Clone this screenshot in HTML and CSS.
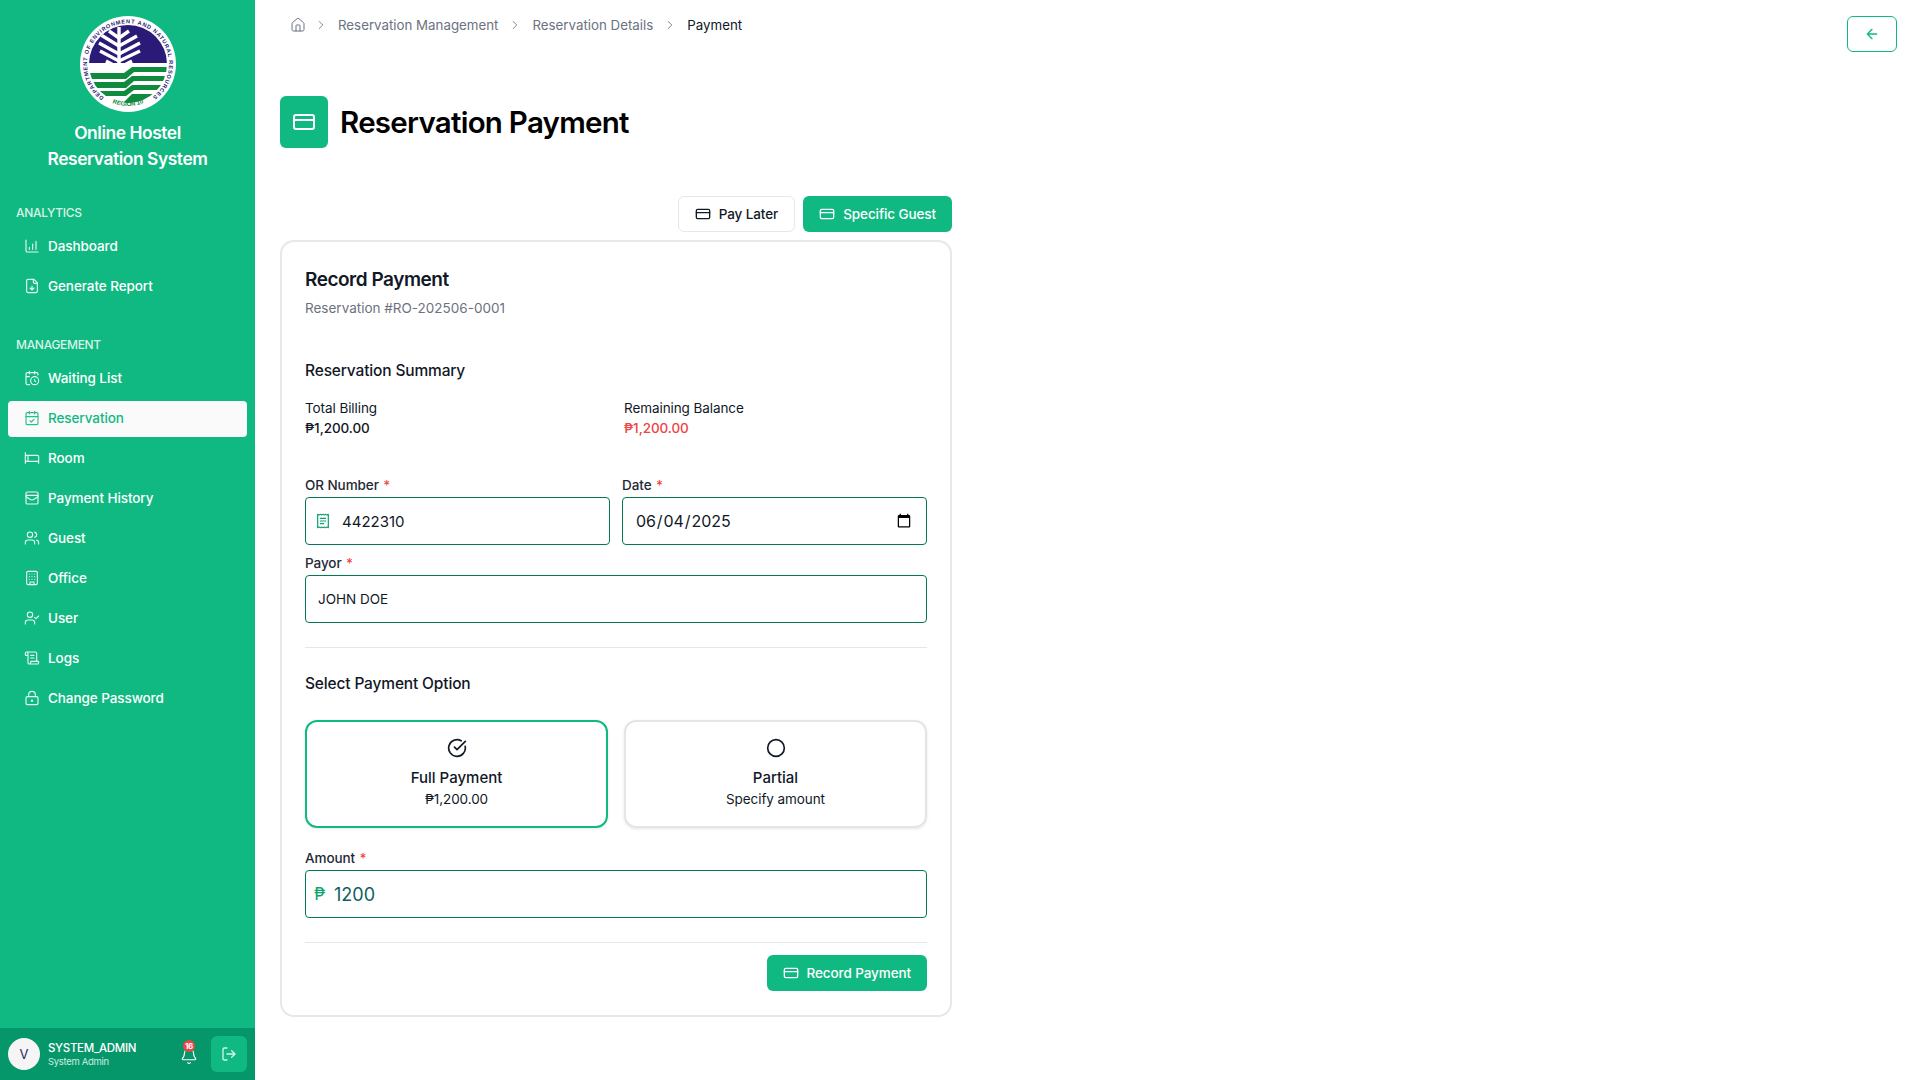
FILE: index.html
```html
<!DOCTYPE html>
<html lang="en">
<head>
    <meta charset="utf-8">
    <title>Reservation Payment</title>
    <link rel="stylesheet" href="styles.css">
</head>
<body>
    <!-- icon set -->
    <svg class="icon-defs" aria-hidden="true">
        <symbol id="i-chart" viewBox="0 0 24 24"><path d="M3 3v16a2 2 0 0 0 2 2h16M8 17v-3M13 17V9M18 17V5"/></symbol>
        <symbol id="i-file" viewBox="0 0 24 24"><path d="M15 2H6a2 2 0 0 0-2 2v16a2 2 0 0 0 2 2h12a2 2 0 0 0 2-2V7Z"/><path d="M14 2v4a2 2 0 0 0 2 2h4M12 18v-6M9 15l3 3 3-3"/></symbol>
        <symbol id="i-cal-clock" viewBox="0 0 24 24"><path d="M21 7.500V6a2 2 0 0 0-2-2H5a2 2 0 0 0-2 2v14a2 2 0 0 0 2 2h3.500M16 2v4M8 2v4M3 10h5M17.500 17.500 16 16.300V14"/><circle cx="16" cy="16" r="6"/></symbol>
        <symbol id="i-cal-check" viewBox="0 0 24 24"><path d="M8 2v4M16 2v4M3 10h18M9 16l2 2 4-4"/><rect x="3" y="4" width="18" height="18" rx="2"/></symbol>
        <symbol id="i-bed" viewBox="0 0 24 24"><path d="M2 4v16M2 8h18a2 2 0 0 1 2 2v10M2 17h20M6 8v9"/></symbol>
        <symbol id="i-wallet" viewBox="0 0 24 24"><rect x="3" y="3" width="18" height="18" rx="2"/><path d="M3 8h18M3 10l6 4c2 1.300 4 1.300 6 0l6-4"/></symbol>
        <symbol id="i-users" viewBox="0 0 24 24"><path d="M16 21v-2a4 4 0 0 0-4-4H6a4 4 0 0 0-4 4v2M22 21v-2a4 4 0 0 0-3-3.870M16 3.130a4 4 0 0 1 0 7.750"/><circle cx="9" cy="7" r="4"/></symbol>
        <symbol id="i-office" viewBox="0 0 24 24"><rect x="4" y="2" width="16" height="20" rx="2"/><path d="M9 22v-4h6v4M8 6h.01M12 6h.01M16 6h.01M8 10h.01M12 10h.01M16 10h.01M8 14h.01M12 14h.01M16 14h.01"/></symbol>
        <symbol id="i-user" viewBox="0 0 24 24"><path d="M16 21v-2a4 4 0 0 0-4-4H6a4 4 0 0 0-4 4v2M16 11l2 2 4-4"/><circle cx="9" cy="7" r="4"/></symbol>
        <symbol id="i-scroll" viewBox="0 0 24 24"><path d="M15 12h-5M15 8h-5M19 17V5a2 2 0 0 0-2-2H4M8 21h12a2 2 0 0 0 2-2v-1a1 1 0 0 0-1-1H11a1 1 0 0 0-1 1v1a2 2 0 1 1-4 0V5a2 2 0 1 0-4 0v2a1 1 0 0 0 1 1h3"/></symbol>
        <symbol id="i-lock" viewBox="0 0 24 24"><circle cx="12" cy="16" r="1"/><rect x="3" y="10" width="18" height="12" rx="2"/><path d="M7 10V7a5 5 0 0 1 10 0v3"/></symbol>
        <symbol id="i-bell" viewBox="0 0 24 24"><path d="M10.268 21a2 2 0 0 0 3.464 0M3.262 15.326A1 1 0 0 0 4 17h16a1 1 0 0 0 .74-1.673C19.410 13.956 18 12.499 18 8A6 6 0 0 0 6 8c0 4.499-1.411 5.956-2.738 7.326"/></symbol>
        <symbol id="i-logout" viewBox="0 0 24 24"><path d="M9 21H5a2 2 0 0 1-2-2V5a2 2 0 0 1 2-2h4M16 17l5-5-5-5M21 12H9"/></symbol>
        <symbol id="i-home" viewBox="0 0 24 24"><path d="M15 21v-8a1 1 0 0 0-1-1h-4a1 1 0 0 0-1 1v8"/><path d="M3 10a2 2 0 0 1 .709-1.528l7-5.999a2 2 0 0 1 2.582 0l7 5.999A2 2 0 0 1 21 10v9a2 2 0 0 1-2 2H5a2 2 0 0 1-2-2z"/></symbol>
        <symbol id="i-chevron" viewBox="0 0 24 24"><path d="M9 18l6-6-6-6"/></symbol>
        <symbol id="i-card" viewBox="0 0 24 24"><rect x="2" y="5" width="20" height="14" rx="2"/><path d="M2 10h20"/></symbol>
        <symbol id="i-back" viewBox="0 0 24 24"><path d="M12 19l-7-7 7-7M19 12H5"/></symbol>
        <symbol id="i-receipt" viewBox="0 0 24 24"><path d="M4 2v20l2-1 2 1 2-1 2 1 2-1 2 1 2-1 2 1V2l-2 1-2-1-2 1-2-1-2 1-2-1-2 1Z"/><path d="M16 8H8M16 12H8M13 16H8"/></symbol>
        <symbol id="i-check" viewBox="0 0 24 24"><path d="M21.801 10A10 10 0 1 1 17 3.335M9 11l3 3L22 4"/></symbol>
        <symbol id="i-circle" viewBox="0 0 24 24"><circle cx="12" cy="12" r="10"/></symbol>
    </svg>

    <aside class="sidebar">
        <div class="brand">
            <svg class="logo" viewBox="0 0 96 96" role="img" aria-label="DENR Region 10 seal">
                <defs>
                    <clipPath id="inner"><circle cx="48" cy="48" r="39"/></clipPath>
                    <path id="ringTop" d="M24 81.500A41 41 0 1 1 72 81.500"/>
                    <path id="ringBottom" d="M30 86A42.500 42.500 0 0 0 66 86"/>
                </defs>
                <circle cx="48" cy="48" r="48" fill="#fff"/>
                <g clip-path="url(#inner)">
                    <rect x="9" y="9" width="78" height="38" fill="#2c1a78"/>
                    <g class="logo-tree">
                        <path d="M39 11V52"/>
                        <path d="M39 22 29 15M39 30 21 19M39 38 19 27M39 45 20 35M39 52 26 45"/>
                        <path d="M39 22 49 15M39 30 57 20M39 38 60 27M39 45 60 35M39 52 52 45"/>
                    </g>
                    <path class="logo-band" d="M8 57H44L52 51H88V56H54L46 63H8Z"/>
                    <path class="logo-band" d="M8 66H44L52 60H88V65H54L46 72H8Z"/>
                    <path class="logo-band" d="M20 75H44L52 69H88V74H54L46 80H20Z"/>
                    <path class="logo-band" d="M44 86 52 78H88V90H44Z"/>
                </g>
                <text class="logo-text"><textPath href="#ringTop" textLength="205">DEPARTMENT OF ENVIRONMENT AND NATURAL RESOURCES</textPath></text>
                <text class="logo-region"><textPath href="#ringBottom" startOffset="50%">REGION 10</textPath></text>
            </svg>
            <h1>Online Hostel<br>Reservation System</h1>
        </div>

        <p class="nav-label nav-label-first">ANALYTICS</p>
        <a class="nav-item"><svg class="ic"><use href="#i-chart"/></svg>Dashboard</a>
        <a class="nav-item"><svg class="ic"><use href="#i-file"/></svg>Generate Report</a>

        <p class="nav-label">MANAGEMENT</p>
        <a class="nav-item"><svg class="ic"><use href="#i-cal-clock"/></svg>Waiting List</a>
        <a class="nav-item active"><svg class="ic"><use href="#i-cal-check"/></svg>Reservation</a>
        <a class="nav-item"><svg class="ic"><use href="#i-bed"/></svg>Room</a>
        <a class="nav-item"><svg class="ic"><use href="#i-wallet"/></svg>Payment History</a>
        <a class="nav-item"><svg class="ic"><use href="#i-users"/></svg>Guest</a>
        <a class="nav-item"><svg class="ic"><use href="#i-office"/></svg>Office</a>
        <a class="nav-item"><svg class="ic"><use href="#i-user"/></svg>User</a>
        <a class="nav-item"><svg class="ic"><use href="#i-scroll"/></svg>Logs</a>
        <a class="nav-item"><svg class="ic"><use href="#i-lock"/></svg>Change Password</a>

        <div class="user-bar">
            <div class="avatar">V</div>
            <div class="user-info">
                <div class="user-name">SYSTEM_ADMIN</div>
                <div class="user-role">System Admin</div>
            </div>
            <div class="bell">
                <svg class="ic ic-bell"><use href="#i-bell"/></svg>
                <span class="badge">16</span>
            </div>
            <button class="logout"><svg class="ic"><use href="#i-logout"/></svg></button>
        </div>
    </aside>

    <main class="main">
        <div class="topbar">
            <nav class="breadcrumb">
                <svg class="ic crumb-home"><use href="#i-home"/></svg>
                <svg class="ic crumb-sep"><use href="#i-chevron"/></svg>
                <a>Reservation Management</a>
                <svg class="ic crumb-sep"><use href="#i-chevron"/></svg>
                <a>Reservation Details</a>
                <svg class="ic crumb-sep"><use href="#i-chevron"/></svg>
                <span class="crumb-current">Payment</span>
            </nav>
            <button class="back-btn"><svg class="ic"><use href="#i-back"/></svg></button>
        </div>

        <div class="page-title">
            <div class="title-icon"><svg class="ic"><use href="#i-card"/></svg></div>
            <h2>Reservation Payment</h2>
        </div>

        <div class="column">
            <div class="actions">
                <button class="btn btn-light"><svg class="ic"><use href="#i-card"/></svg>Pay Later</button>
                <button class="btn btn-green"><svg class="ic"><use href="#i-card"/></svg>Specific Guest</button>
            </div>

            <form class="card">
                <h3 class="card-title">Record Payment</h3>
                <p class="card-sub">Reservation #RO-202506-0001</p>

                <h4 class="section-title summary-title">Reservation Summary</h4>
                <div class="summary">
                    <div>
                        <div class="summary-label">Total Billing</div>
                        <div class="summary-value">₱1,200.00</div>
                    </div>
                    <div>
                        <div class="summary-label">Remaining Balance</div>
                        <div class="summary-value red">₱1,200.00</div>
                    </div>
                </div>

                <div class="field-row">
                    <div>
                        <label class="field-label">OR Number <span class="req">*</span></label>
                        <div class="input-wrap">
                            <svg class="ic input-icon"><use href="#i-receipt"/></svg>
                            <input class="input input-or" type="text" value="4422310">
                        </div>
                    </div>
                    <div>
                        <label class="field-label">Date <span class="req">*</span></label>
                        <input class="input input-date" type="date" value="2025-06-04">
                    </div>
                </div>

                <label class="field-label payor-label">Payor <span class="req">*</span></label>
                <input class="input input-payor" type="text" value="JOHN DOE">

                <hr class="divider">

                <h4 class="section-title option-title">Select Payment Option</h4>
                <div class="options">
                    <div class="option selected">
                        <svg class="ic"><use href="#i-check"/></svg>
                        <div class="option-name">Full Payment</div>
                        <div class="option-sub">₱1,200.00</div>
                    </div>
                    <div class="option">
                        <svg class="ic"><use href="#i-circle"/></svg>
                        <div class="option-name">Partial</div>
                        <div class="option-sub">Specify amount</div>
                    </div>
                </div>

                <label class="field-label amount-label">Amount <span class="req">*</span></label>
                <div class="input-wrap">
                    <span class="peso">₱</span>
                    <input class="input input-amount" type="text" value="1200">
                </div>

                <hr class="divider">

                <div class="card-footer">
                    <button class="btn btn-green" type="button"><svg class="ic"><use href="#i-card"/></svg>Record Payment</button>
                </div>
            </form>
        </div>
    </main>
</body>
</html>
```

FILE: styles.css
```css
* {
    box-sizing: border-box;
}
body {
    font-family: Inter, "Noto Sans", sans-serif;
    margin: 0;
    display: flex;
    height: 100vh;
    overflow: hidden;
    background-color: #fff;
    color: #111827;
    letter-spacing: -0.005em;
}
p, h1, h2, h3, h4 {
    margin: 0;
}
button, input {
    font-family: inherit;
    letter-spacing: inherit;
}
.icon-defs {
    display: none;
}
.ic {
    width: 16px;
    height: 16px;
    flex-shrink: 0;
    fill: none;
    stroke: currentColor;
    stroke-width: 2;
    stroke-linecap: round;
    stroke-linejoin: round;
}

/* sidebar */
.sidebar {
    width: 255px;
    flex-shrink: 0;
    height: 100%;
    display: flex;
    flex-direction: column;
    background-color: #10b981;
    color: #fff;
}
.brand {
    padding-top: 16px;
    text-align: center;
}
.logo {
    display: block;
    width: 96px;
    height: 96px;
    margin: 0 auto;
}
.logo-tree path {
    fill: none;
    stroke: #fff;
    stroke-width: 3.4;
}
.logo-band {
    fill: #108a3c;
}
.logo-text {
    font-family: "Liberation Sans", sans-serif;
    font-size: 5.6px;
    font-weight: 700;
    letter-spacing: 0;
    fill: #2c1a78;
}
.logo-region {
    font-family: "Liberation Sans", sans-serif;
    font-size: 6px;
    font-weight: 700;
    letter-spacing: 0;
    text-anchor: middle;
    fill: #108a3c;
}
.brand h1 {
    margin-top: 8px;
    font-size: 17.400px;
    font-weight: 600;
    line-height: 26px;
    letter-spacing: -0.025em;
}
.nav-label {
    margin: 30px 0 6px 16px;
    font-size: 12px;
    font-weight: 500;
    line-height: 16px;
    letter-spacing: -0.025em;
    color: #d9f3e8;
}
.nav-label-first {
    margin-top: 33px;
}
.nav-item {
    display: flex;
    align-items: center;
    gap: 8px;
    height: 36px;
    margin: 2px 8px;
    padding: 0 0 2px 16px;
    border-radius: 4px;
    font-size: 13.500px;
    font-weight: 500;
}
.nav-item .ic {
    stroke-width: 1.700;
    opacity: 0.9;
}
.nav-item.active {
    background-color: #fafafa;
    color: #10b981;
}
.user-bar {
    display: flex;
    align-items: center;
    height: 52px;
    margin-top: auto;
    padding: 0 8px;
    background-color: #059669;
}
.avatar {
    width: 32px;
    height: 32px;
    border-radius: 50%;
    background-color: #f5f5f5;
    color: #1f2a5a;
    font-size: 13px;
    line-height: 32px;
    text-align: center;
}
.user-info {
    margin-left: 8px;
    padding-top: 1px;
    flex: 1;
    letter-spacing: -0.02em;
}
.user-name {
    font-size: 11.500px;
    font-weight: 500;
    line-height: 15px;
}
.user-role {
    font-size: 9.500px;
    line-height: 12px;
    color: #c9efe0;
}
.bell {
    position: relative;
    width: 20px;
    height: 22px;
    margin-right: 12px;
}
.ic-bell {
    display: block;
    width: 18px;
    height: 18px;
    margin: 4px 0 0 1px;
    stroke-width: 1.600;
}
.badge {
    position: absolute;
    top: -3px;
    left: 4px;
    width: 12px;
    height: 12px;
    border-radius: 50%;
    background-color: #ef4444;
    font-size: 8px;
    font-weight: 700;
    line-height: 12px;
    letter-spacing: -0.03em;
    text-align: center;
}
.logout {
    display: flex;
    align-items: center;
    justify-content: center;
    width: 36px;
    height: 36px;
    padding: 0;
    border: none;
    border-radius: 6px;
    background-color: #10b981;
    color: #d5f5e8;
}

/* main */
.main {
    flex: 1;
    padding: 16px 24px 0 25px;
}
.topbar {
    display: flex;
    justify-content: space-between;
    align-items: flex-start;
}
.breadcrumb {
    display: flex;
    align-items: center;
    gap: 10px;
    height: 18px;
    padding-left: 10px;
    font-size: 13.300px;
    letter-spacing: 0;
    color: #6b7280;
}
.crumb-home {
    margin-right: -2px;
    stroke-width: 1.500;
}
.crumb-sep {
    width: 14px;
    height: 14px;
    stroke-width: 1.500;
}
.crumb-current {
    color: #111827;
}
.back-btn {
    display: flex;
    align-items: center;
    justify-content: center;
    width: 50px;
    height: 36px;
    padding: 0;
    border: 1.500px solid #10b981;
    border-radius: 6px;
    background-color: #fff;
    color: #10b981;
}
.page-title {
    display: flex;
    align-items: center;
    gap: 12px;
    margin-top: 44px;
}
.title-icon {
    display: flex;
    align-items: center;
    justify-content: center;
    width: 48px;
    height: 52px;
    border-radius: 6px;
    background-color: #10b981;
    color: #fff;
}
.title-icon .ic {
    width: 24px;
    height: 24px;
}
.page-title h2 {
    font-size: 29.500px;
    font-weight: 600;
    letter-spacing: -0.025em;
    color: #000;
}
.column {
    width: 672px;
}
.actions {
    display: flex;
    justify-content: flex-end;
    gap: 8px;
    margin-top: 48px;
}
.btn {
    display: flex;
    align-items: center;
    gap: 8px;
    height: 36px;
    padding: 0 16px 1px;
    border: none;
    border-radius: 6px;
    font-size: 13.500px;
    font-weight: 500;
    letter-spacing: -0.007em;
}
.btn-green {
    background-color: #10b981;
    color: #fff;
}
.btn-light {
    border: 1px solid #e5e7eb;
    background-color: #fff;
    color: #111827;
}
.card {
    margin-top: 8px;
    padding: 24px 23px 24px;
    border: 2px solid #e8e8e8;
    border-radius: 14px;
    background-color: #fff;
}
.card-title {
    font-size: 19px;
    font-weight: 600;
    line-height: 28px;
    letter-spacing: -0.025em;
}
.card-sub {
    margin-top: 4px;
    font-size: 13.500px;
    line-height: 20px;
    letter-spacing: 0;
    color: #6b7280;
}
.section-title {
    font-size: 15.500px;
    font-weight: 500;
    line-height: 24px;
    letter-spacing: -0.01em;
}
.summary-title {
    margin-top: 41px;
}
.summary {
    display: grid;
    grid-template-columns: 1fr 1fr;
    column-gap: 16px;
    margin-top: 15px;
}
.summary-label,
.summary-value {
    font-size: 13.500px;
    line-height: 20px;
}
.summary-value {
    font-weight: 500;
}
.red {
    color: #ef4444;
}
.field-row {
    display: grid;
    grid-template-columns: 1fr 1fr;
    column-gap: 12px;
    margin-top: 37px;
}
.field-label {
    display: block;
    margin-bottom: 2px;
    font-size: 13.500px;
    font-weight: 500;
    line-height: 20px;
    color: #1f2937;
}
.req {
    margin-left: 1px;
    color: #ef4444;
}
.payor-label {
    margin-top: 8px;
}
.amount-label {
    margin-top: 20px;
}
.input-wrap {
    position: relative;
}
.input {
    display: block;
    width: 100%;
    height: 48px;
    padding: 0 12px;
    border: 1px solid #047857;
    border-radius: 4px;
    background-color: #fff;
    color: #111827;
    font-size: 15px;
    letter-spacing: 0;
    outline: none;
}
.input-or {
    padding-left: 36px;
}
.input-date {
    padding-left: 12px;
    padding-right: 12px;
    font-size: 16px;
    letter-spacing: -0.005em;
}
.input-payor {
    font-size: 13.500px;
}
.input-amount {
    padding-left: 28px;
    font-size: 18px;
    color: #0f5f5f;
}
.input-icon {
    position: absolute;
    top: 16px;
    left: 10px;
    color: #10a36f;
    stroke-width: 1.800;
}
.peso {
    position: absolute;
    top: 14px;
    left: 9px;
    font-size: 17px;
    line-height: 20px;
    color: #10a36f;
}
.divider {
    height: 0;
    margin: 24px 0 0;
    border: none;
    border-top: 1px solid #e5e7eb;
}
.option-title {
    margin-top: 24px;
}
.options {
    display: grid;
    grid-template-columns: 1fr 1fr;
    column-gap: 16px;
    margin-top: 24px;
}
.option {
    display: flex;
    flex-direction: column;
    align-items: center;
    height: 108px;
    padding-top: 16px;
    border: 2px solid #e5e5e5;
    border-radius: 12px;
    box-shadow: 0 1px 3px rgba(0, 0, 0, 0.1);
    text-align: center;
}
.option.selected {
    border-color: #10b981;
}
.option .ic {
    width: 20px;
    height: 20px;
}
.option-name {
    margin-top: 9px;
    font-size: 15px;
    font-weight: 500;
    line-height: 22px;
    letter-spacing: 0;
}
.option-sub {
    font-size: 13.500px;
    line-height: 20px;
}
.card-footer {
    display: flex;
    justify-content: flex-end;
    margin-top: 12px;
}
```
